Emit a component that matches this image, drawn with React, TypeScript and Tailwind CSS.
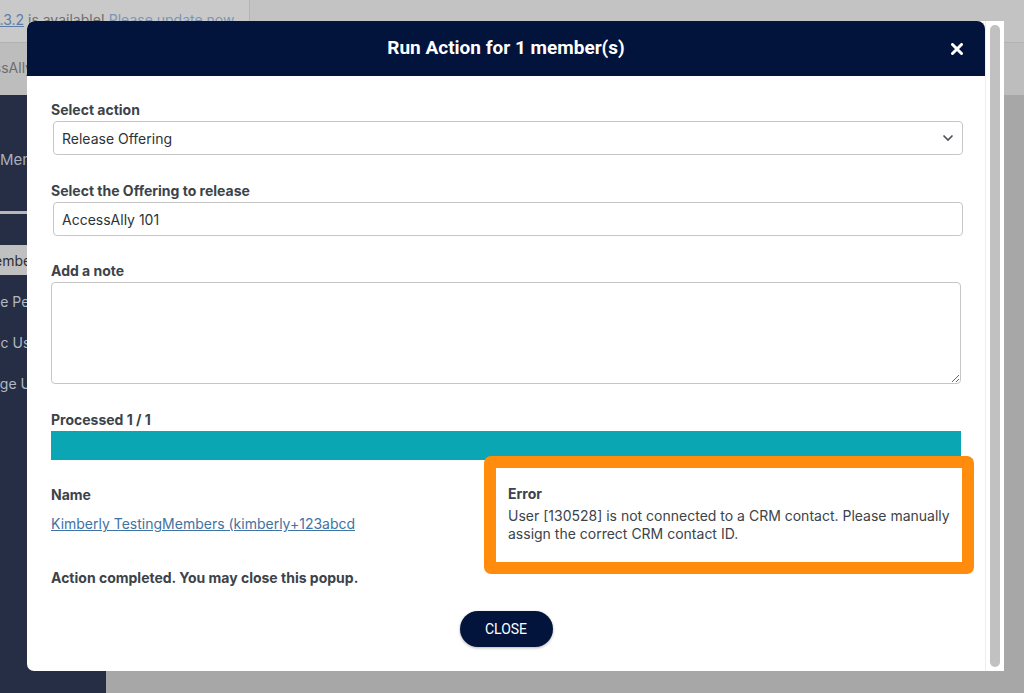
import React from "react";

const sideItems = [
  { label: "All Members", shift: "-ml-[39px]", active: true },
  { label: "Change Permissions", shift: "-ml-[43px]", active: false },
  { label: "Public Users", shift: "-ml-[32px]", active: false },
  { label: "Merge Users", shift: "-ml-[26px]", active: false },
];

const Label = ({ children }: { children: React.ReactNode }) => (
  <p className="mb-px text-[14px] leading-5 font-bold text-[#3c434a]">
    {children}
  </p>
);

export default function App() {
  return (
    <div className="relative h-[693px] w-[1024px] overflow-hidden bg-[#a7a7a7] font-['Inter',sans-serif]">
      {/* page behind the overlay */}
      <div className="flex h-[43px] border-b border-[#b2b2b2] bg-[#c3c3c3]">
        <div className="w-[250px] overflow-hidden border-r border-[#b4b4b4] bg-[#c9c9c9] pt-[10px] text-[14px] leading-5 whitespace-nowrap text-[#6f6f6f]">
          <span className="-ml-[86px] inline-block">
            <span className="text-[#5c7fa8] underline">AccessAlly 4.3.2</span>{" "}
            is available!{" "}
            <span className="text-[#7c95b6]">Please update now.</span>
          </span>
        </div>
        <div className="flex-1" />
      </div>
      <div className="h-[52px] overflow-hidden bg-[#bdbdbd] pt-[15px] text-[14px] leading-5 whitespace-nowrap text-[#6e6e6e]">
        <span className="-ml-[40px] inline-block">AccessAlly</span>
      </div>
      <div className="flex h-[598px]">
        <div className="w-[106px] overflow-hidden bg-[#262e45] pt-[55px] whitespace-nowrap">
          <p className="text-[15px] leading-5 text-[#a9aebb]">Members</p>
          <div className="mt-[41px] h-[3px] bg-[#b7b7b7]" />
          <div className="mt-[31px]">
            {sideItems.map((item) => (
              <div
                key={item.label}
                className={
                  item.active
                    ? "mb-[11px] flex h-[30px] items-center bg-[#c0c0c0] text-[14px] text-[#2e2e2e]"
                    : "mb-[11px] flex h-[30px] items-center text-[14px] text-[#b3b8c3]"
                }
              >
                <span className={item.shift}>{item.label}</span>
              </div>
            ))}
          </div>
        </div>
        <div className="flex-1" />
      </div>

      {/* modal */}
      <div className="absolute top-[21px] left-[27px] flex h-[650px] w-[977px] overflow-hidden rounded-l-[7px] bg-white">
        <div className="relative flex w-[958px] flex-col">
          <div className="grid h-[55px] grid-cols-[1fr_auto_1fr] items-center rounded-t-[8px] bg-[#02143c] font-['Roboto',sans-serif]">
            <span />
            <h2 className="text-[19px] font-bold text-white">
              Run Action for 1 member(s)
            </h2>
            <div className="flex justify-end pr-[22px]">
              <svg width="12" height="12" viewBox="0 0 12 12">
                <path
                  d="M1.5 1.5 L10.5 10.5 M10.5 1.5 L1.5 10.5"
                  stroke="white"
                  strokeWidth="3"
                  strokeLinecap="round"
                />
              </svg>
            </div>
          </div>

          <div className="flex flex-col px-[24px] pt-[24px] text-[14px] text-[#2c3338]">
            <Label>Select action</Label>
            <div className="-mr-[2px] ml-[2px] flex h-[34px] items-center justify-between rounded-[4px] border border-[#c6c6c6] pr-[8px] pl-[8px]">
              <span>Release Offering</span>
              <svg width="12" height="8" viewBox="0 0 12 8">
                <path
                  d="M1.5 1.5 L6 6 L10.5 1.5"
                  fill="none"
                  stroke="#4a4f55"
                  strokeWidth="1.6"
                />
              </svg>
            </div>

            <div className="mt-[26px]">
              <Label>Select the Offering to release</Label>
            </div>
            <div className="-mr-[2px] ml-[2px] flex h-[34px] items-center rounded-[4px] border border-[#c6c6c6] pl-[8px]">
              AccessAlly 101
            </div>

            <div className="mt-[25px]">
              <Label>Add a note</Label>
            </div>
            <textarea className="block h-[102px] w-full resize-y rounded-[4px] border border-[#c6c6c6]" />

            <div className="mt-[26px]">
              <Label>Processed 1 / 1</Label>
            </div>
            <div className="h-[29px] bg-[#0aa6b4]" />

            <div className="mt-[25px] grid grid-cols-2">
              <div>
                <p className="text-[14px] leading-5 font-bold text-[#3c434a]">
                  Name
                </p>
                <a className="mt-[9px] block w-[304px] overflow-hidden leading-5 whitespace-nowrap text-[#3f73a3] underline">
                  Kimberly TestingMembers (kimberly+123abcde@accessally.com)
                </a>
              </div>
              <div className="pl-[2px] text-[#3c434a]">
                <p className="leading-[18px] font-bold">Error</p>
                <p className="mt-[4px] leading-[18px]">
                  User [130528] is not connected to a CRM contact. Please
                  manually assign the correct CRM contact ID.
                </p>
              </div>
            </div>

            <p className="mt-[25px] leading-5 font-bold text-[#3c434a]">
              Action completed. You may close this popup.
            </p>

            <button className="mt-[23px] h-[36px] w-[93px] self-center rounded-full bg-[#02143c] font-['Roboto',sans-serif] text-[14px] text-white shadow-[0_1px_3px_rgba(0,0,0,0.3)]">
              CLOSE
            </button>
          </div>

          {/* highlight annotation */}
          <div className="absolute top-[435px] left-[457px] h-[118px] w-[490px] rounded-[7px] border-[12px] border-[#ff8c0c]" />
        </div>

        {/* scrollbar */}
        <div className="flex w-[19px] border-l border-[#ededed] pt-[4px] pr-[3px] pb-[4px] pl-[4px]">
          <div className="w-[10px] rounded-full bg-[#c1c1c1]" />
        </div>
      </div>
    </div>
  );
}
